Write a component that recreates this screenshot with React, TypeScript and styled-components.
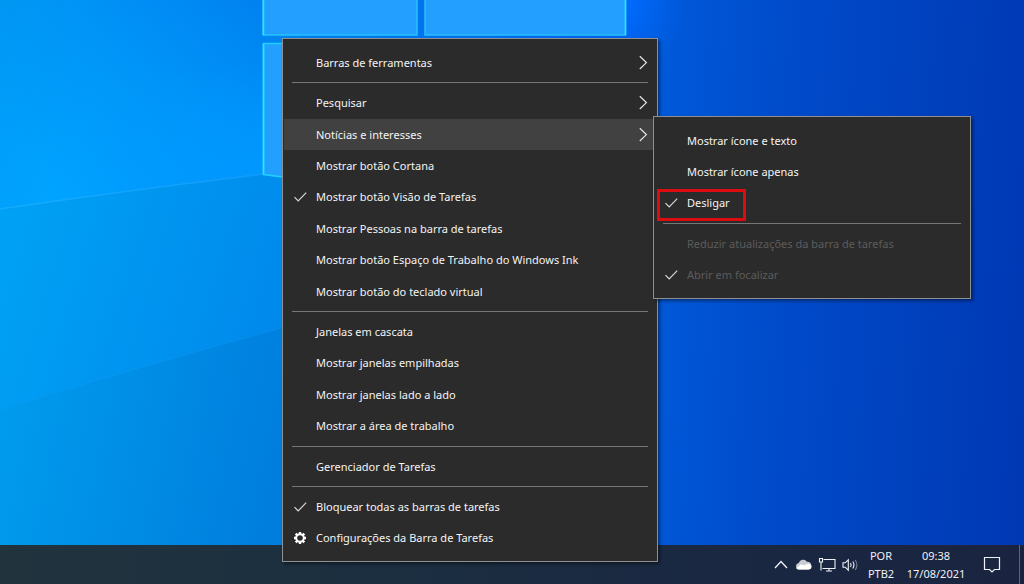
import React from "react";
import styled, { createGlobalStyle, css } from "styled-components";

const GlobalStyle = createGlobalStyle`
  *, *::before, *::after { box-sizing: border-box; }
  html, body, #root { height: 100%; margin: 0; }
  body { overflow: hidden; }
  body, button { font-family: "Noto Sans", "Open Sans", sans-serif; font-size: 11px; }
  ul { list-style: none; margin: 0; padding: 0; }
`;

const Desktop = styled.main`
  position: relative;
  display: flex;
  flex-direction: column;
  min-height: 100vh;
  overflow: hidden;
  background: #0050d8;
`;

const Screen = styled.div`
  flex: 1;
  display: flex;
  min-height: 0;
  position: relative;
`;

const Wallpaper = styled.svg`
  position: absolute;
  inset: 0;
  width: 100%;
  height: 100%;
`;

const menuSurface = css`
  position: absolute;
  display: flex;
  flex-direction: column;
  padding: 8px 0 7px;
  border: 1px solid #8e9092;
  background: #2b2b2b;
  box-shadow: 2px 2px 3px rgba(0, 0, 0, 0.45);
`;

const ContextMenu = styled.ul`
  && {
    ${menuSurface}
    z-index: 2;
    top: 38px;
    bottom: 22px;
    left: 282px;
    width: 376px;
  }
`;

const Submenu = styled.ul`
  && {
    ${menuSurface}
    z-index: 3;
    top: -3px;
    left: 370px;
    width: 318px;
    height: 183px;
  }
`;

const Entry = styled.li`
  position: relative;
  flex: 1;
  display: flex;
`;

const EntryButton = styled.button<{ $active?: boolean }>`
  flex: 1;
  display: flex;
  align-items: center;
  margin: 0 1px;
  padding: 0 8px 0 9px;
  border: 0;
  background: ${(p) => (p.$active ? "#414141" : "transparent")};
  color: #f4f4f4;
  line-height: 16px;
  text-align: left;
  white-space: nowrap;

  &:disabled {
    color: #5c5c5c;
  }
`;

const IconSlot = styled.span`
  display: flex;
  align-items: center;
  flex: none;
  width: 23px;
  height: 16px;
  color: #d8d8d8;
`;

const Label = styled.span`
  flex: 1;
`;

const Separator = styled.li`
  flex: none;
  height: 1px;
  margin: 4px 9px;
  background: #777777;
`;

const Highlight = styled.span`
  position: absolute;
  inset: 1px auto -2px 3px;
  width: 89px;
  border: 3px solid #dd0c10;
  pointer-events: none;
`;

const Taskbar = styled.footer`
  flex: none;
  display: flex;
  justify-content: flex-end;
  height: 39px;
  background: linear-gradient(90deg, #21333d 0%, #1c2f40 35%, #1a2842 70%, #1a2440 100%);
  color: #eef1f5;
`;

const Tray = styled.div`
  display: flex;
  align-items: center;
  gap: 6px;
  padding-right: 10px;
`;

const TrayButton = styled.button`
  display: flex;
  align-items: center;
  justify-content: center;
  padding: 0;
  border: 0;
  background: transparent;
  color: inherit;
`;

const TextButton = styled(TrayButton)<{ $width: number }>`
  flex-direction: column;
  width: ${(p) => p.$width}px;
  line-height: 18px;
  white-space: nowrap;
`;

const ActionCenter = styled(TrayButton)`
  width: 34px;
`;

const ShowDesktop = styled.button`
  width: 5px;
  padding: 0;
  border: 0;
  border-left: 1px solid #5d6779;
  background: transparent;
`;

const Check = () => (
  <svg width="14" height="12" viewBox="0 0 14 12" fill="none" stroke="currentColor" strokeWidth="1.2" aria-hidden="true">
    <path d="M1.5 6.2 5.2 9.9 13.2 1.6" />
  </svg>
);

const Chevron = () => (
  <svg width="10" height="16" viewBox="0 0 10 16" fill="none" stroke="#e6e6e6" strokeWidth="1.2" aria-hidden="true">
    <path d="M1.8 1.3 8.4 7.6 1.8 14" />
  </svg>
);

const Gear = () => (
  <svg width="14" height="14" viewBox="0 0 14 14" fill="none" stroke="#fff" aria-hidden="true">
    <circle cx="7" cy="7" r="3.8" strokeWidth="2" />
    <g strokeWidth="2.4">
      <path d="M7 1v2M7 11v2M1 7h2M11 7h2M2.7 2.7l1.5 1.5M9.800 9.800l1.5 1.5M11.300 2.700 9.800 4.200M4.200 9.800l-1.5 1.5" />
    </g>
  </svg>
);

type ItemProps = {
  label: string;
  icon?: "check" | "gear";
  arrow?: boolean;
  active?: boolean;
  disabled?: boolean;
  highlighted?: boolean;
  children?: React.ReactNode;
};

const Item = ({ label, icon, arrow, active, disabled, highlighted, children }: ItemProps) => (
  <Entry role="none">
    <EntryButton
      type="button"
      role={icon === "check" ? "menuitemcheckbox" : "menuitem"}
      aria-checked={icon === "check" ? true : undefined}
      aria-haspopup={arrow ? "menu" : undefined}
      $active={active}
      disabled={disabled}
    >
      <IconSlot>
        {icon === "check" && <Check />}
        {icon === "gear" && <Gear />}
      </IconSlot>
      <Label>{label}</Label>
      {arrow && <Chevron />}
    </EntryButton>
    {highlighted && <Highlight />}
    {children}
  </Entry>
);

const WallpaperArt = () => (
  <Wallpaper viewBox="0 0 1024 545" preserveAspectRatio="none" aria-hidden="true">
    <defs>
      <linearGradient id="base" gradientUnits="userSpaceOnUse" x1="300" y1="0" x2="1060" y2="40">
        <stop offset="0" stopColor="#007eee" />
        <stop offset="0.4" stopColor="#0064f0" />
        <stop offset="0.47" stopColor="#005adb" />
        <stop offset="0.65" stopColor="#004bca" />
        <stop offset="1" stopColor="#0037b2" />
      </linearGradient>
      <radialGradient id="flare" gradientUnits="userSpaceOnUse" cx="0" cy="0" r="1" gradientTransform="translate(626 0) scale(60 80)">
        <stop offset="0" stopColor="#006cff" />
        <stop offset="1" stopColor="#0064f0" stopOpacity="0" />
      </radialGradient>
      <linearGradient id="upper" gradientUnits="userSpaceOnUse" x1="260" y1="0" x2="80" y2="200">
        <stop offset="0" stopColor="#0082f0" />
        <stop offset="0.5" stopColor="#0095f8" />
        <stop offset="1" stopColor="#00a3ff" />
      </linearGradient>
      <radialGradient id="glow" gradientUnits="userSpaceOnUse" cx="0" cy="0" r="1" gradientTransform="translate(250 180) scale(200 120)">
        <stop offset="0" stopColor="#0098ff" />
        <stop offset="1" stopColor="#0098ff" stopOpacity="0" />
      </radialGradient>
      <linearGradient id="shade" gradientUnits="userSpaceOnUse" x1="0" y1="0" x2="120" y2="60">
        <stop offset="0" stopColor="#0096ee" stopOpacity="0.6" />
        <stop offset="1" stopColor="#0094f4" stopOpacity="0" />
      </linearGradient>
      <linearGradient id="lower" gradientUnits="userSpaceOnUse" x1="0" y1="300" x2="300" y2="390">
        <stop offset="0" stopColor="#00a0f4" />
        <stop offset="1" stopColor="#0086ea" />
      </linearGradient>
      <linearGradient id="floor" gradientUnits="userSpaceOnUse" x1="0" y1="440" x2="300" y2="500">
        <stop offset="0" stopColor="#009bed" />
        <stop offset="1" stopColor="#007bdc" />
      </linearGradient>
      <linearGradient id="ray" x1="0" y1="0" x2="1" y2="0">
        <stop offset="0" stopColor="#22b2ff" stopOpacity="0.6" />
        <stop offset="1" stopColor="#20a4ff" stopOpacity="0.5" />
      </linearGradient>
    </defs>
    <rect width="1024" height="545" fill="url(#base)" />
    <rect x="600" width="100" height="100" fill="url(#flare)" />
    <path d="M0 0H300V215H0Z" fill="url(#upper)" />
    <path d="M0 0H300V215H0Z" fill="url(#glow)" />
    <path d="M0 0H300V215H0Z" fill="url(#shade)" />
    <path d="M0 209Q130 190 264 174L300 180V545H0Z" fill="url(#lower)" />
    <path d="M0 410Q140 366 300 323V545H0Z" fill="url(#floor)" />
    <path d="M0 209Q130 190 264 174" fill="none" stroke="url(#ray)" strokeWidth="1.5" />
    <path d="M0 410Q140 366 300 323" fill="none" stroke="#1a9df5" strokeOpacity="0.3" />
    <g fill="#229fff">
      <path d="M263-2H417V35H263Z" stroke="#24c2fb" strokeWidth="1.5" />
      <path d="M425-2H625.5V35H425Z" stroke="#2abffc" strokeWidth="1.5" />
      <path d="M263.5 43.5H300V179L263.5 174.5Z" stroke="#20d0fc" strokeWidth="1.7" />
      <path d="M263.5 0V35M263.5 44V174M625.5 0V35" stroke="#2ee2ff" strokeWidth="1.5" />
    </g>
  </Wallpaper>
);

export default function App() {
  return (
    <>
      <GlobalStyle />
      <Desktop>
        <Screen>
          <WallpaperArt />
        </Screen>

        <ContextMenu role="menu" aria-label="Barra de tarefas">
          <Item label="Barras de ferramentas" arrow />
          <Separator role="separator" />
          <Item label="Pesquisar" arrow />
          <Item label="Notícias e interesses" arrow active>
            <Submenu role="menu" aria-label="Notícias e interesses">
              <Item label="Mostrar ícone e texto" />
              <Item label="Mostrar ícone apenas" />
              <Item label="Desligar" icon="check" highlighted />
              <Separator role="separator" />
              <Item label="Reduzir atualizações da barra de tarefas" disabled />
              <Item label="Abrir em focalizar" icon="check" disabled />
            </Submenu>
          </Item>
          <Item label="Mostrar botão Cortana" />
          <Item label="Mostrar botão Visão de Tarefas" icon="check" />
          <Item label="Mostrar Pessoas na barra de tarefas" />
          <Item label="Mostrar botão Espaço de Trabalho do Windows Ink" />
          <Item label="Mostrar botão do teclado virtual" />
          <Separator role="separator" />
          <Item label="Janelas em cascata" />
          <Item label="Mostrar janelas empilhadas" />
          <Item label="Mostrar janelas lado a lado" />
          <Item label="Mostrar a área de trabalho" />
          <Separator role="separator" />
          <Item label="Gerenciador de Tarefas" />
          <Separator role="separator" />
          <Item label="Bloquear todas as barras de tarefas" icon="check" />
          <Item label="Configurações da Barra de Tarefas" icon="gear" />
        </ContextMenu>

        <Taskbar>
          <Tray>
            <TrayButton type="button" aria-label="Mostrar ícones ocultos">
              <svg width="16" height="16" viewBox="0 0 16 16" fill="none" stroke="currentColor" strokeWidth="1.3">
                <path d="M2 11 8 4.500l6 6.500" />
              </svg>
            </TrayButton>
            <TrayButton type="button" aria-label="OneDrive">
              <svg width="17" height="16" viewBox="0 0 17 16">
                <path d="M4 12.500a3.300 3.300 0 0 1-.3-6.500A4.700 4.700 0 0 1 12 4.700a4 4 0 0 1 1.500 7.800Z" fill="#c9cdd3" />
                <path d="M1.200 11 6 7.200 9 8.200 12.500 7A3 3 0 0 1 16.500 9.500 3 3 0 0 1 13.500 12.500H4A3 3 0 0 1 1.200 11Z" fill="#ffffff" />
              </svg>
            </TrayButton>
            <TrayButton type="button" aria-label="Rede">
              <svg width="18" height="16" viewBox="0 0 18 16" fill="none" stroke="currentColor" strokeWidth="1.1">
                <path d="M5.500 2.500H17V11.500H4.500M8 14H14M11 11.500V14" />
                <path d="M1.500 1.500H4.500V5H1.500ZM3 5V13.500" />
              </svg>
            </TrayButton>
            <TrayButton type="button" aria-label="Volume">
              <svg width="17" height="16" viewBox="0 0 17 16" fill="none" stroke="currentColor" strokeWidth="1.1">
                <path d="M1 5.800H3.200L6.300 2.800V13.200L3.200 10.200H1Z" />
                <path d="M8.500 6Q9.900 8 8.500 10M10.800 4.500Q13.200 8 10.800 11.500" />
                <path d="M13.200 3Q16.700 8 13.200 13" strokeOpacity="0.45" />
              </svg>
            </TrayButton>
            <TextButton type="button" $width={32}>
              <span>POR</span>
              <span>PTB2</span>
            </TextButton>
            <TextButton type="button" $width={66}>
              <span>09:38</span>
              <span>17/08/2021</span>
            </TextButton>
            <ActionCenter type="button" aria-label="Central de ações">
              <svg width="18" height="18" viewBox="0 0 18 18" fill="none" stroke="currentColor" strokeWidth="1.2">
                <path d="M1.500 1.500H16.500V13.500H11.500L9 16 6.500 13.500H1.500Z" />
              </svg>
            </ActionCenter>
          </Tray>
          <ShowDesktop type="button" aria-label="Mostrar área de trabalho" />
        </Taskbar>
      </Desktop>
    </>
  );
}
